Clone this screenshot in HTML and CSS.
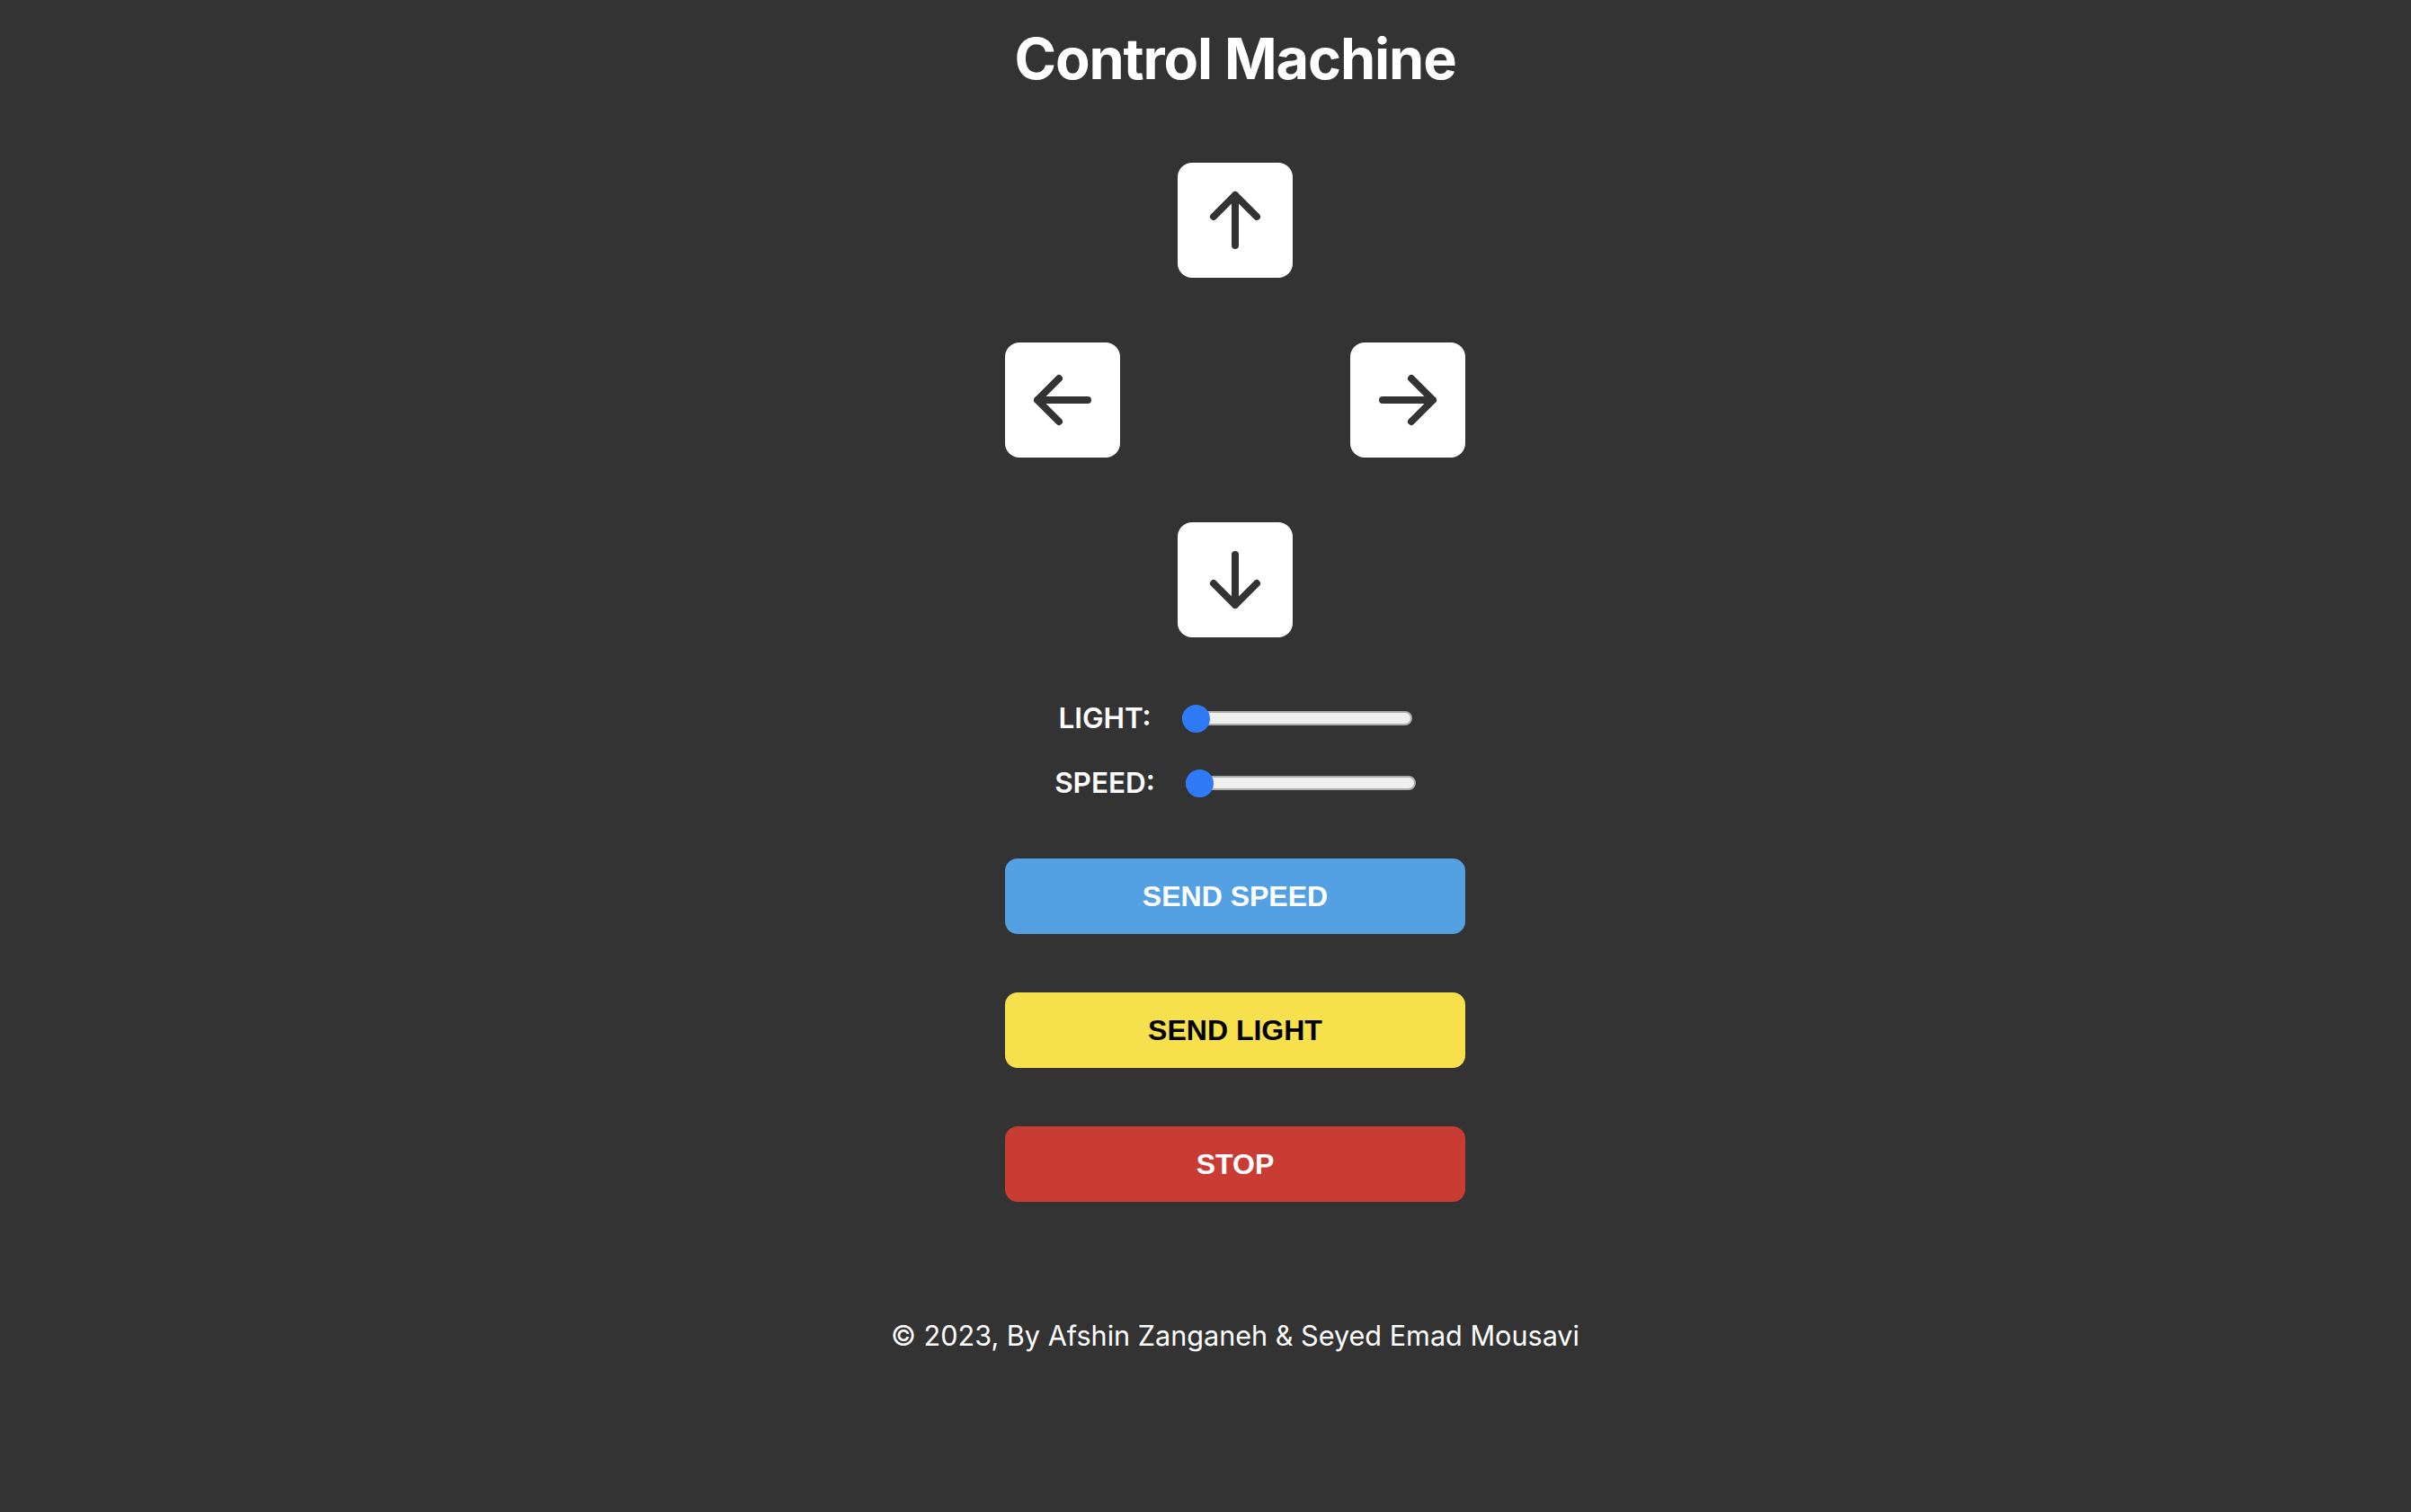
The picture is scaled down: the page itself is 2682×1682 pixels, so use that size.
FILE: index.html
```html
<!DOCTYPE html>
<html lang="en">
<head>
<meta charset="utf-8">
<title>Control Machine</title>
<link rel="stylesheet" href="styles.css">
</head>
<body>
<main class="page">
  <h1 class="title">Control Machine</h1>

  <div class="pad">
    <button class="arrow arrow-up" aria-label="Up">
      <svg viewBox="0 0 128 128" width="128" height="128"><path d="M64 92V36M40 60L64 36L88 60"/></svg>
    </button>
    <button class="arrow arrow-left" aria-label="Left">
      <svg viewBox="0 0 128 128" width="128" height="128"><path d="M92 64H36M60 40L36 64L60 88"/></svg>
    </button>
    <button class="arrow arrow-right" aria-label="Right">
      <svg viewBox="0 0 128 128" width="128" height="128"><path d="M36 64H92M68 40L92 64L68 88"/></svg>
    </button>
    <button class="arrow arrow-down" aria-label="Down">
      <svg viewBox="0 0 128 128" width="128" height="128"><path d="M64 36V92M40 68L64 92L88 68"/></svg>
    </button>
  </div>

  <div class="sliders">
    <label class="slider-row">
      <span class="slider-label">LIGHT:</span>
      <input class="range" type="range" min="0" max="100" value="0">
    </label>
    <label class="slider-row">
      <span class="slider-label">SPEED:</span>
      <input class="range" type="range" min="0" max="100" value="0">
    </label>
  </div>

  <div class="actions">
    <button class="action action-speed">SEND SPEED</button>
    <button class="action action-light">SEND LIGHT</button>
    <button class="action action-stop">STOP</button>
  </div>

  <footer class="footer">© 2023, By Afshin Zanganeh &amp; Seyed Emad Mousavi</footer>
</main>
</body>
</html>
```

FILE: styles.css
```css
* { box-sizing: border-box; }

html, body {
  margin: 0;
  padding: 0;
  background: #333333;
}

body {
  font-family: Inter, "Noto Sans", "Liberation Sans", sans-serif;
  color: #ffffff;
  min-height: 1682px;
}

.page {
  display: flex;
  flex-direction: column;
  align-items: center;
  padding: 27px 0 0 66px;
}

.title {
  margin: 0;
  font-size: 63px;
  line-height: 77px;
  font-weight: 700;
  letter-spacing: -1.1px;
}

.pad {
  margin-top: 77px;
  display: grid;
  grid-template-columns: 128px 128px 128px;
  grid-template-rows: 128px 128px 128px;
  column-gap: 64px;
  row-gap: 72px;
}

.arrow {
  width: 128px;
  height: 128px;
  padding: 0;
  border: none;
  border-radius: 16px;
  background: #ffffff;
  display: flex;
  align-items: center;
  justify-content: center;
  cursor: pointer;
}

.arrow svg {
  display: block;
  fill: none;
  stroke: #333333;
  stroke-width: 8;
  stroke-linecap: round;
  stroke-linejoin: round;
}

.arrow-up { grid-column: 2; grid-row: 1; }
.arrow-left { grid-column: 1; grid-row: 2; }
.arrow-right { grid-column: 3; grid-row: 2; }
.arrow-down { grid-column: 2; grid-row: 3; }

.sliders {
  margin-top: 70px;
  display: flex;
  flex-direction: column;
  align-items: center;
  row-gap: 32px;
}

.slider-row {
  height: 40px;
  display: flex;
  align-items: center;
  column-gap: 34px;
}

.slider-label {
  font-size: 31.5px;
  font-weight: 600;
  line-height: 40px;
}

.range {
  -webkit-appearance: none;
  appearance: none;
  width: 256px;
  height: 31px;
  margin: 0;
  background: transparent;
}

.range::-webkit-slider-runnable-track {
  height: 16px;
  background: #efefef;
  border: 2px solid #acacac;
  border-radius: 8px;
}

.range::-webkit-slider-thumb {
  -webkit-appearance: none;
  appearance: none;
  width: 31px;
  height: 31px;
  margin-top: -9.5px;
  margin-left: -2px;
  border-radius: 50%;
  background: #2f7af6;
  border: none;
}

.actions {
  margin-top: 64px;
  display: flex;
  flex-direction: column;
  row-gap: 65px;
}

.action {
  width: 512px;
  height: 84px;
  border: none;
  border-radius: 14px;
  font-family: "Liberation Sans", Arial, sans-serif;
  font-weight: 700;
  font-size: 32px;
  cursor: pointer;
}

.action-speed { background: #53a0e3; color: #ffffff; }
.action-light { background: #f6e04b; color: #000000; }
.action-stop { background: #c83c34; color: #ffffff; }

.footer {
  margin-top: 131px;
  font-size: 30.6px;
  line-height: 36px;
  font-weight: 400;
}
```
